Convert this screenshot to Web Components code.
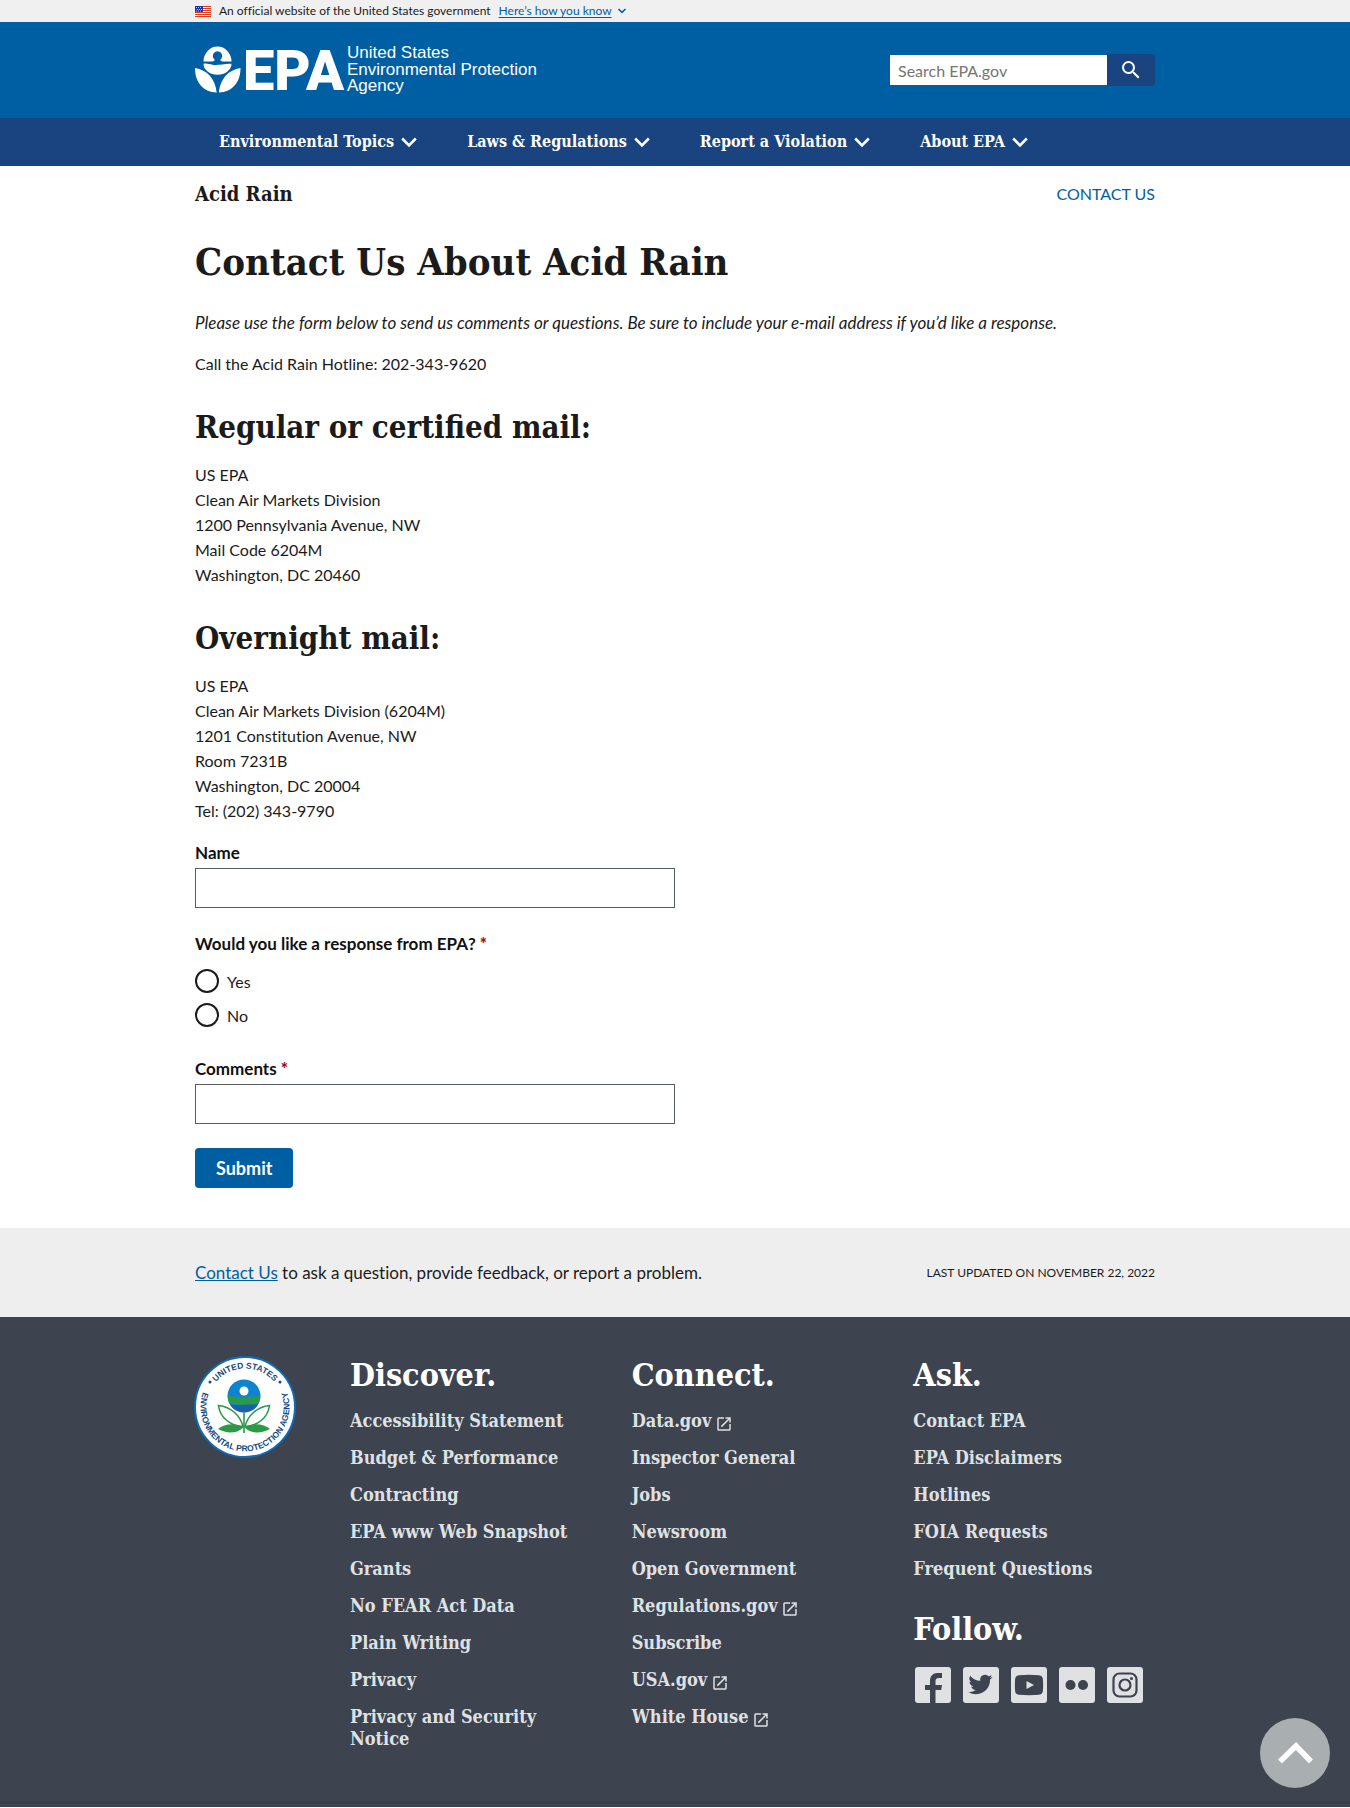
<!DOCTYPE html>
<html lang="en">
<head>
<meta charset="utf-8">
<title>Contact Us About Acid Rain | US EPA</title>
<style>
  :root {
    --blue: #005ea2;
    --navy: #1a4480;
    --ink: #1b1b1b;
    --band: #eeeeee;
    --slate: #3e4350;
    --mist: #dfe1e2;
    --serif: "DejaVu Serif Condensed", "DejaVu Serif", serif;
    --sans: Lato, "Open Sans", sans-serif;
  }
  body { margin: 0; background: #fff; color: var(--ink); font-family: var(--sans); font-size: 16px; line-height: 25px; font-variant-ligatures: none; }
</style>
</head>
<body>
<epa-banner></epa-banner>
<epa-header></epa-header>
<epa-nav>
  <epa-nav-item>Environmental Topics</epa-nav-item>
  <epa-nav-item>Laws &amp; Regulations</epa-nav-item>
  <epa-nav-item>Report a Violation</epa-nav-item>
  <epa-nav-item>About EPA</epa-nav-item>
</epa-nav>
<epa-contact-page></epa-contact-page>
<epa-page-meta></epa-page-meta>
<epa-footer></epa-footer>
<epa-back-top></epa-back-top>

<script>
const shared = `
  *, *::before, *::after { box-sizing: border-box; }
  :host { display: block; }
  .wrap { max-width: 960px; margin: 0 auto; }
  a { color: var(--blue); }
`;
function define(name, html, setup) {
  const tpl = document.createElement('template');
  tpl.innerHTML = html;
  customElements.define(name, class extends HTMLElement {
    constructor() {
      super();
      this.attachShadow({ mode: 'open' }).append(tpl.content.cloneNode(true));
    }
    connectedCallback() { if (setup) setup(this, this.shadowRoot); }
  });
}

define('epa-banner', `
<style>${shared}
  :host { background: #f0f0f0; font-size: 12px; line-height: 22px; }
  .wrap { display: flex; align-items: center; gap: 8px; height: 22px; }
  button { font: inherit; color: var(--blue); background: none; border: 0; padding: 0; display: flex; align-items: center; gap: 5px; }
  u { text-underline-offset: 2px; }
</style>
<section class="wrap" aria-label="Official website">
  <svg width="16" height="11" viewBox="0 0 16 11" aria-hidden="true">
    <path fill="#fff" d="M0 0h16v11H0z"/>
    <path stroke="#db3e1f" d="M0 .5h16M0 2.5h16M0 4.5h16M0 6.5h16M0 8.5h16M0 10.5h16"/>
    <path fill="#1e33b1" d="M0 0h8v6H0z"/>
    <path stroke="#fff" stroke-dasharray="1 1" d="M1 1.5h6M2 3.5h5M1 5h6" stroke-width=".7"/>
  </svg>
  <span>An official website of the United States government</span>
  <button type="button"><u>Here’s how you know</u>
    <svg width="10" height="6" viewBox="0 0 10 6" fill="none" stroke="#005ea2" stroke-width="1.6" aria-hidden="true"><path d="M1.5 1 5 4.3 8.500 1"/></svg>
  </button>
</section>`);

define('epa-logo', `
<style>:host { display: block; } svg { display: block; overflow: visible; }</style>
<svg width="348" height="52" viewBox="0 0 348 52" fill="#fff" role="img" aria-label="United States Environmental Protection Agency">
  <path d="M8.500 15.500a14 15 0 0 1 28 0h-9c-1-.2-2-.9-2.200-1.800a4.700 4.700 0 1 0-5.600 0c-.2.900-1.200 1.600-2.200 1.800z"/>
  <path d="M8.500 17.700c3.500-.6 6 .5 9 1 6 1 12-1.500 19-1a14 11 0 0 1-28 0z"/>
  <path d="M0 22c12 2 20 10 21.700 24.500C7.800 46 0 36 0 22zM45.500 22c-12 2-20 10-21.700 24.500C37.700 46 45.500 36 45.500 22z"/>
  <text x="48" y="44" font-family="Roboto" font-weight="900" font-size="56">EPA</text>
  <g font-family="Liberation Sans" font-size="17">
    <text x="152" y="12">United States</text>
    <text x="152" y="29">Environmental Protection</text>
    <text x="152" y="45">Agency</text>
  </g>
</svg>`);

define('epa-header', `
<style>${shared}
  :host { background: var(--blue); }
  .wrap { display: flex; justify-content: space-between; align-items: flex-start; padding: 24px 0 20px; }
  form { display: flex; align-items: center; margin-top: 8px; }
  input { width: 217px; height: 30px; margin: 0; border: 0; border-radius: 0; background: #fff; padding: 0 8px; font: 16px/24px var(--sans); color: var(--ink); }
  input::placeholder { color: #757575; opacity: 1; }
  button { width: 48px; height: 32px; border: 0; border-radius: 0 4px 4px 0; background: var(--navy); display: flex; align-items: center; justify-content: center; padding: 0; }
  a { display: block; }
</style>
<header class="wrap">
  <a href="#" aria-label="US EPA home"><epa-logo></epa-logo></a>
  <form role="search">
    <input type="search" aria-label="Search" placeholder="Search EPA.gov">
    <button type="button" aria-label="Search">
      <svg width="24" height="24" viewBox="0 0 24 24" fill="#fff" aria-hidden="true"><path d="M15.500 14h-.79l-.28-.27A6.470 6.470 0 0 0 16 9.500 6.500 6.500 0 1 0 9.500 16c1.610 0 3.090-.59 4.230-1.570l.27.28v.79l5 4.990L20.490 19l-4.990-5zm-6 0C7.010 14 5 11.990 5 9.500S7.010 5 9.500 5 14 7.010 14 9.500 11.990 14 9.500 14z"/></svg>
    </button>
  </form>
</header>`);

define('epa-nav', `
<style>${shared}
  :host { background: var(--navy); }
  .wrap { display: flex; gap: 50px; padding: 0 24px; }
</style>
<nav class="wrap" aria-label="Primary"><slot></slot></nav>`);

define('epa-nav-item', `
<style>${shared}
  button { height: 48px; display: flex; align-items: center; gap: 7px; border: 0; padding: 0; background: none; color: #fff; font: 700 16px/24px var(--serif); white-space: nowrap; }
</style>
<button type="button"><span><slot></slot></span>
  <svg width="16" height="11" viewBox="0 0 16 11" fill="none" stroke="#fff" stroke-width="2.600" aria-hidden="true"><path d="M1.200 1.500 8 8.300l6.800-6.800"/></svg>
</button>`);

define('epa-text-field', `
<style>${shared}
  label { display: block; font-weight: 700; font-size: 17px; line-height: 24px; color: #111; }
  b { color: #b50909; }
  input { display: block; width: 100%; max-width: 480px; height: 40px; margin-top: 3px; border: 1px solid #565c65; border-radius: 0; padding: 8px; font: inherit; background: #fff; }
</style>
<label for="f"><slot></slot></label>
<input id="f" type="text">`, (el, root) => {
  if (el.hasAttribute('required')) {
    const star = document.createElement('b');
    star.textContent = ' *';
    root.querySelector('label').append(star);
  }
});

define('epa-contact-page', `
<style>${shared}
  h1, h2, p { margin: 0; }
  .top { display: flex; justify-content: space-between; align-items: center; padding-top: 16px; line-height: 24px; }
  .site { font: 700 20px/24px var(--serif); }
  .top a { text-decoration: none; }
  h1 { font: 700 38px/48px var(--serif); margin-top: 32px; }
  .intro { margin: 24px 0 16px; font-size: 17px; }
  h2 { font: 700 31px/40px var(--serif); margin: 31px 0 15px; }
  form { display: flex; flex-direction: column; gap: 24px; align-items: stretch; padding: 18px 0 40px; }
  fieldset { border: 0; margin: 0; padding: 0; min-width: 0; }
  legend { padding: 0; font-weight: 700; font-size: 17px; line-height: 24px; margin-bottom: 13px; color: #111; }
  legend b { color: #b50909; }
  .radio { display: flex; align-items: center; gap: 8px; height: 24px; }
  .radio + .radio { margin-top: 10px; }
  .radio input { appearance: none; width: 24px; height: 24px; margin: 0; border: 2px solid var(--ink); border-radius: 50%; background: #fff; }
  .radio input:checked { box-shadow: inset 0 0 0 4px #fff; background: var(--blue); }
  .group { padding-bottom: 6px; }
  .send { align-self: flex-start; height: 40px; padding: 0 21px; border: 0; border-radius: 4px; background: var(--blue); color: #fff; font: 700 18px/20px var(--sans); }
</style>
<main class="wrap">
  <div class="top"><div class="site">Acid Rain</div><a href="#">CONTACT US</a></div>
  <h1>Contact Us About Acid Rain</h1>
  <p class="intro"><em>Please use the form below to send us comments or questions. Be sure to include your e-mail address if you’d like a response.</em></p>
  <p>Call the Acid Rain Hotline: 202-343-9620</p>
  <h2>Regular or certified mail:</h2>
  <p>US EPA<br>Clean Air Markets Division<br>1200 Pennsylvania Avenue, NW<br>Mail Code 6204M<br>Washington, DC 20460</p>
  <h2>Overnight mail:</h2>
  <p>US EPA<br>Clean Air Markets Division (6204M)<br>1201 Constitution Avenue, NW<br>Room 7231B<br>Washington, DC 20004<br>Tel: (202) 343-9790</p>
  <form>
    <epa-text-field>Name</epa-text-field>
    <fieldset class="group">
      <legend>Would you like a response from EPA?<b> *</b></legend>
      <div class="radio"><input type="radio" name="reply" id="yes"><label for="yes">Yes</label></div>
      <div class="radio"><input type="radio" name="reply" id="no"><label for="no">No</label></div>
    </fieldset>
    <epa-text-field required>Comments</epa-text-field>
    <button class="send" type="button">Submit</button>
  </form>
</main>`);

define('epa-page-meta', `
<style>${shared}
  :host { background: var(--band); }
  .wrap { display: flex; justify-content: space-between; align-items: center; padding: 32px 0; }
  .ask { font-size: 17px; }
  .date { font-size: 12px; }
</style>
<div class="wrap">
  <div class="ask"><a href="#">Contact Us</a> to ask a question, provide feedback, or report a problem.</div>
  <div class="date">LAST UPDATED ON NOVEMBER 22, 2022</div>
</div>`);

define('epa-seal', `
<style>:host { display: block; } svg { display: block; }</style>
<svg width="104" height="104" viewBox="0 0 104 104" role="img" aria-label="EPA seal">
  <circle cx="52" cy="52" r="50" fill="#fff" stroke="#0d6cb5" stroke-width="2"/>
  <defs>
    <path id="top" d="M13.500 52a38.500 38.500 0 0 1 77 0"/>
    <path id="low" d="M21.400 19.600a44.500 44.500 0 1 0 61.200 0"/>
  </defs>
  <g fill="#164a80" font-family="Liberation Sans" font-weight="700" font-size="8.500">
    <text text-anchor="middle"><textPath href="#top" startOffset="50%">UNITED STATES</textPath></text>
    <text text-anchor="middle"><textPath href="#low" startOffset="50%">ENVIRONMENTAL PROTECTION AGENCY</textPath></text>
  </g>
  <circle cx="17" cy="27" r="1.500" fill="#164a80"/><circle cx="87" cy="27" r="1.500" fill="#164a80"/>
  <circle cx="51" cy="41" r="16.500" fill="#0e84cf"/>
  <path fill="#2b9a46" d="M34.600 41.500c6-1.500 10 2 16 1.500s11-2.500 16.900-1.500a16.500 16.500 0 0 1-2.200 7.200c-9 2-19 .5-28.600 0a16.500 16.500 0 0 1-2.100-7.200z"/>
  <path fill="#1a5fa8" d="M36.900 49.500c9 1.200 18-.5 28.200 0a16.500 16.500 0 0 1-28.200 0z"/>
  <circle cx="51" cy="36" r="4.500" fill="#fff"/>
  <path stroke="#2b9a46" stroke-width="1.600" d="M51 58v20"/>
  <path fill="none" stroke="#2b9a46" stroke-width="1.600" d="M50 71.500C38 71 27 63 25.500 50.500 38 52 47 60 50 71.500zM52 71.500C64 71 75 63 76.500 50.500 64 52 55 60 52 71.500z"/>
  <path fill="#2b9a46" d="M50.500 72.500C42 80 33 78 25 74c6-5 17-7 25.500-1.500zM51.500 72.500C60 80 69 78 77 74c-6-5-17-7-25.500-1.500z"/>
</svg>`);

define('epa-link-list', `
<style>${shared}
  h2 { margin: 0 0 15px; color: #fff; font: 700 32px/40px var(--serif); }
  ul { list-style: none; margin: 0; padding: 0; display: flex; flex-direction: column; gap: 15px; }
  li { font: 700 18px/22px var(--serif); }
  li a { display: block; color: var(--mist); text-decoration: none; }
  li svg { vertical-align: -4px; margin: -2px; }
</style>
<h2></h2><ul></ul>`, (el, root) => {
  root.querySelector('h2').textContent = el.getAttribute('heading');
  const ul = root.querySelector('ul');
  for (const entry of el.getAttribute('links').split('|')) {
    const external = entry.endsWith('^');
    const li = document.createElement('li');
    const a = document.createElement('a');
    a.href = '#';
    a.textContent = entry.replace('^', '');
    if (external) {
      a.insertAdjacentHTML('beforeend', ' <svg width="18" height="18" viewBox="0 0 24 24" fill="#dfe1e2" aria-hidden="true"><path d="M19 19H5V5h7V3H5a2 2 0 0 0-2 2v14a2 2 0 0 0 2 2h14c1.100 0 2-.9 2-2v-7h-2v7zM14 3v2h3.590l-9.830 9.830 1.410 1.410L19 6.410V10h2V3h-7z"/></svg>');
    }
    li.append(a);
    ul.append(li);
  }
});

define('epa-social', `
<style>${shared}
  h2 { margin: 0 0 18px; color: #fff; font: 700 32px/40px var(--serif); }
  div { display: flex; gap: 12px; padding-left: 2px; }
  a, svg { display: block; }
  svg { fill: var(--slate); }
  rect.tile, .tri { fill: var(--mist); }
</style>
<h2>Follow.</h2>
<div>
  <a href="#" aria-label="Facebook"><svg width="36" height="36" viewBox="0 0 36 36"><rect class="tile" width="36" height="36" rx="3"/><path d="M15 36V23h-5v-5h5v-4c0-5 3-8 7.500-8H27v5h-3c-2.500 0-3.500 1-3.500 3.200V18H27l-.8 5h-5.700v13z"/></svg></a>
  <a href="#" aria-label="Twitter"><svg width="36" height="36" viewBox="0 0 36 36"><rect class="tile" width="36" height="36" rx="3"/><path transform="translate(5.500 5.500)" d="M24 4.560a9.800 9.800 0 0 1-2.830.77 4.930 4.930 0 0 0 2.170-2.720 9.900 9.900 0 0 1-3.130 1.190 4.920 4.920 0 0 0-8.380 4.480A13.970 13.970 0 0 1 1.670 3.150a4.930 4.930 0 0 0 1.520 6.570 4.900 4.900 0 0 1-2.230-.61c-.05 2.280 1.580 4.420 3.950 4.890a4.900 4.900 0 0 1-2.220.08 4.920 4.920 0 0 0 4.600 3.420A9.870 9.870 0 0 1 0 19.540a13.900 13.900 0 0 0 7.550 2.210c9.140 0 14.300-7.720 13.990-14.640A10 10 0 0 0 24 4.560z"/></svg></a>
  <a href="#" aria-label="YouTube"><svg width="36" height="36" viewBox="0 0 36 36"><rect class="tile" width="36" height="36" rx="3"/><path d="M8 8.300c6-.7 14-.7 20 0 2.600.3 3.700 1.600 3.900 4 .3 4 .3 8 0 11.500-.2 2.500-1.300 3.600-3.900 3.900-6 .6-14 .6-20 0-2.600-.3-3.700-1.400-3.900-3.900-.3-4-.3-8 0-11.500.2-2.400 1.300-3.700 3.900-4z"/><path class="tri" d="m15.500 14 7.500 4-7.500 4z"/></svg></a>
  <a href="#" aria-label="Flickr"><svg width="36" height="36" viewBox="0 0 36 36"><rect class="tile" width="36" height="36" rx="3"/><circle cx="11.500" cy="18" r="5"/><circle cx="24" cy="18" r="5"/></svg></a>
  <a href="#" aria-label="Instagram"><svg width="36" height="36" viewBox="0 0 36 36"><rect class="tile" width="36" height="36" rx="3"/><g fill="none" stroke="#3e4350" stroke-width="2.200"><rect x="6.500" y="6.500" width="23" height="23" rx="6"/><circle cx="18" cy="18" r="5.500"/></g><circle cx="24.500" cy="11.500" r="1.500"/></svg></a>
</div>`);

define('epa-footer', `
<style>${shared}
  :host { background: var(--slate); }
  .wrap { display: grid; grid-template-columns: 115px repeat(3, 1fr); gap: 40px; padding: 38px 0 52px; }
  epa-seal { margin: 0 -2px; }
  .ask { display: flex; flex-direction: column; gap: 29px; }
  .rule { border-top: 1px solid #363945; height: 5px; }
</style>
<footer>
  <div class="wrap">
    <epa-seal></epa-seal>
    <epa-link-list heading="Discover." links="Accessibility Statement|Budget &amp; Performance|Contracting|EPA www Web Snapshot|Grants|No FEAR Act Data|Plain Writing|Privacy|Privacy and Security Notice"></epa-link-list>
    <epa-link-list heading="Connect." links="Data.gov^|Inspector General|Jobs|Newsroom|Open Government|Regulations.gov^|Subscribe|USA.gov^|White House^"></epa-link-list>
    <div class="ask">
      <epa-link-list heading="Ask." links="Contact EPA|EPA Disclaimers|Hotlines|FOIA Requests|Frequent Questions"></epa-link-list>
      <epa-social></epa-social>
    </div>
  </div>
  <div class="rule"></div>
</footer>`);

define('epa-back-top', `
<style>
  :host { position: fixed; right: 20px; bottom: 20px; display: block; }
  a { display: flex; align-items: center; justify-content: center; width: 70px; height: 70px; border-radius: 50%; background: #a9aeb1; }
</style>
<a href="#" aria-label="Back to top"><svg width="36" height="24" viewBox="0 0 36 24" fill="none" stroke="#fff" stroke-width="5.500" aria-hidden="true"><path d="M3 20.500 19 5l15 15.500"/></svg></a>`);
</script>
</body>
</html>
